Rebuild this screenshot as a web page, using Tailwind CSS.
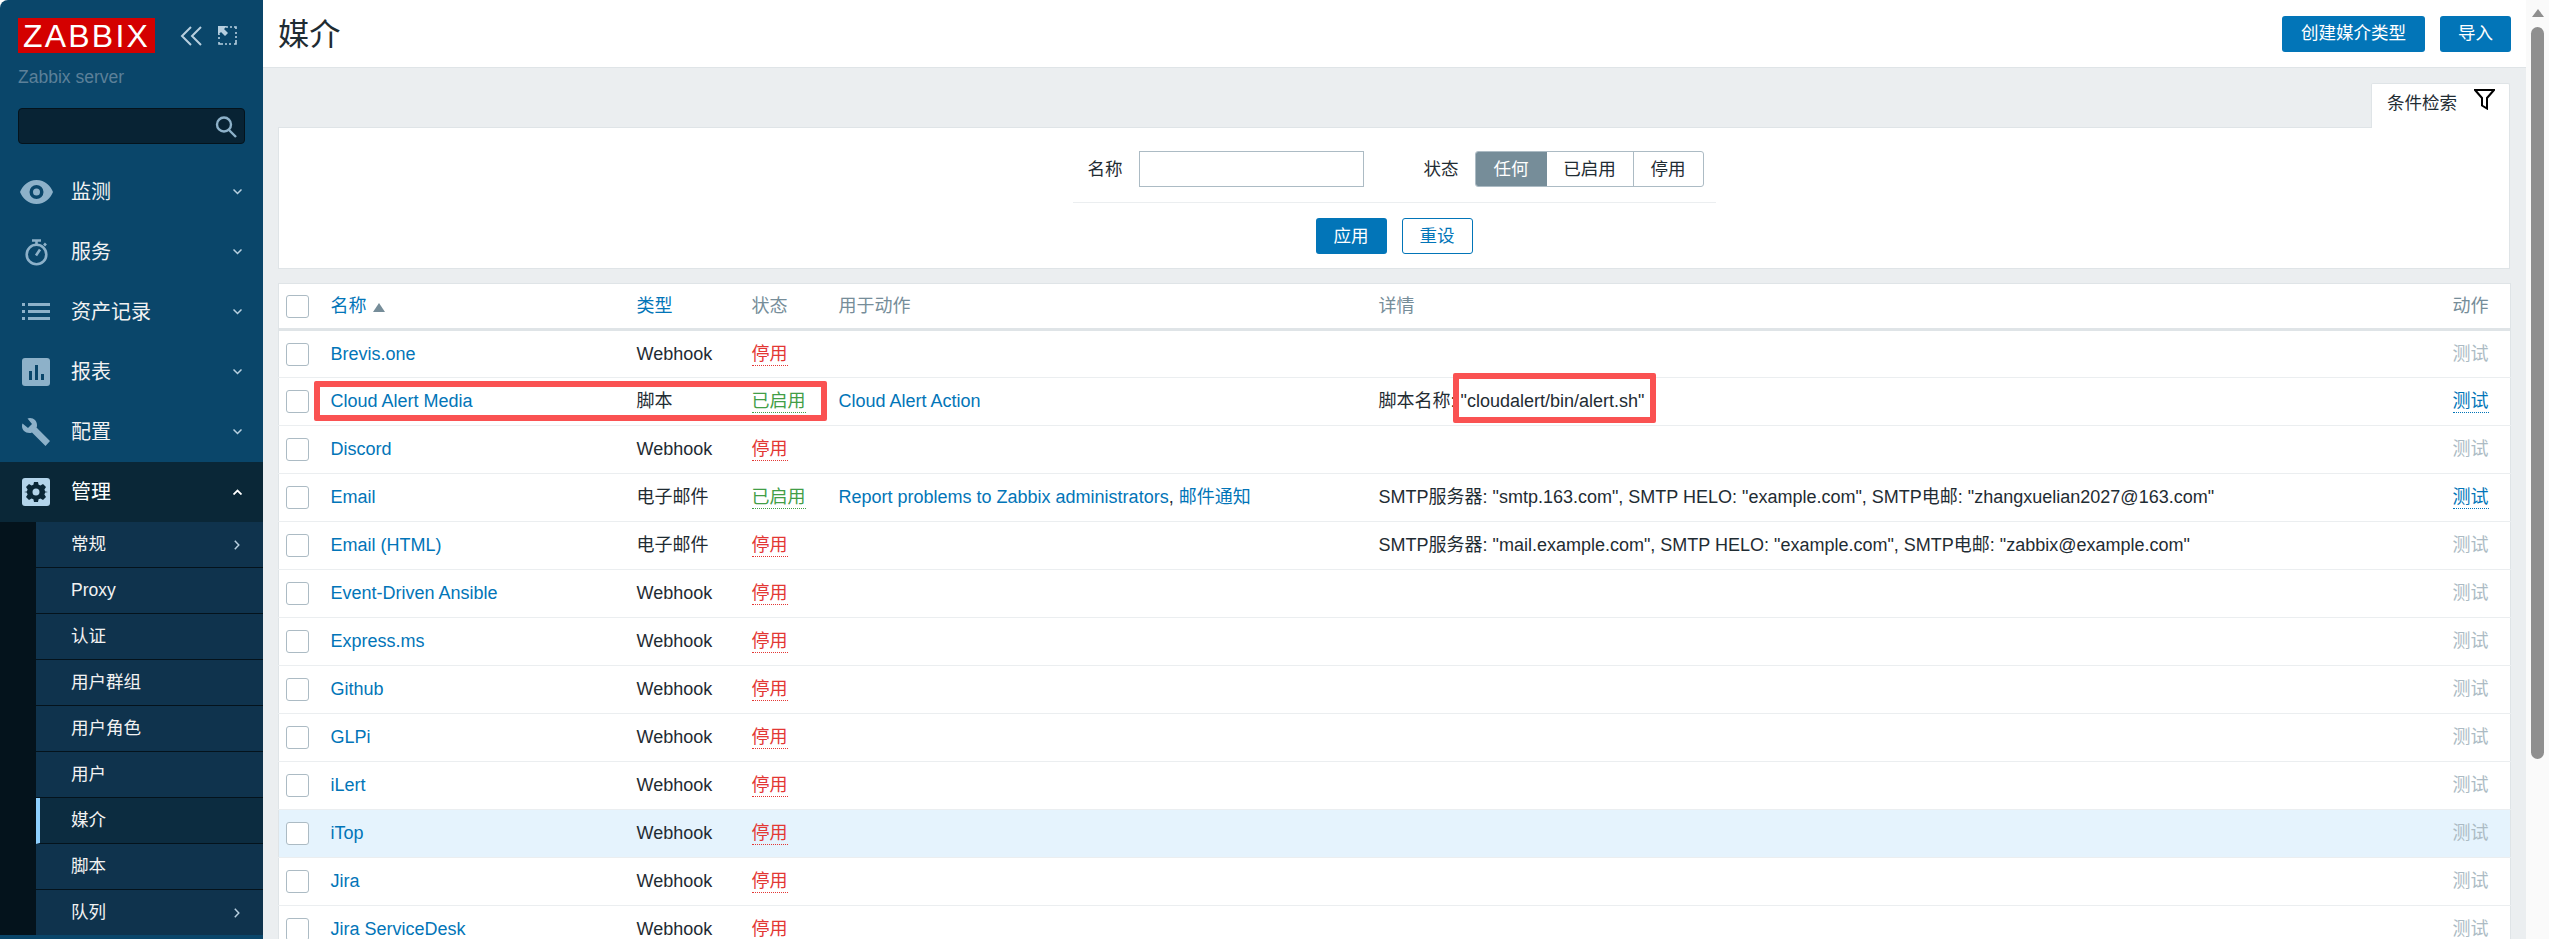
<!DOCTYPE html>
<html lang="zh">
<head>
    <meta charset="UTF-8">
    <title>媒介</title>
    <script src="https://cdn.jsdelivr.net/npm/@tailwindcss/browser@4"></script>
</head>
<body class="h-[939px] overflow-hidden bg-white text-[#1f2c33] text-[17.55px] font-['Liberation_Sans','Noto_Sans_CJK_SC',sans-serif]">
<div class="flex h-[939px]">

    <!-- sidebar -->
    <aside class="w-[263px] shrink-0 bg-[#0a466a] rounded-tl-lg text-[#f2f2f2]">
        <div class="flex items-center h-[35px] mt-[18px] ml-[18px]">
            <div class="w-[137px] h-[35px] bg-[#d40000] text-white text-[32px] leading-[36px] tracking-[2.2px] pl-[5px] overflow-hidden">ZABBIX</div>
            <svg class="ml-[25px]" width="22" height="20" viewBox="0 0 22 20" fill="none" stroke="#b7cfdf" stroke-width="2"><path d="M11 1 2 10l9 9M21 1l-9 9 9 9"/></svg>
            <svg class="ml-[16px]" width="19" height="19" viewBox="0 0 19 19" fill="none"><path d="M8 1h2M12 1h2M16 1h2v2M18 6v2M18 10v2M18 14v4h-2M13 18h-2M9 18H7M5 18H1v-2M1 13v-2M1 9V8" stroke="#b7cfdf" stroke-width="1.6"/><path d="M0 0h9L6 3l4 4-3 3-4-4-3 3z" fill="#b7cfdf"/></svg>
        </div>
        <div class="ml-[18px] mt-[15px] leading-[18px] text-[#5c8099]">Zabbix server</div>
        <div class="relative mx-[18px] mt-[22px] h-[36px] bg-[#082334] border border-[#04131c] rounded-[4px]">
            <svg class="absolute right-[6px] top-[6px]" width="24" height="24" viewBox="0 0 24 24" fill="none" stroke="#8db1c9" stroke-width="2.4"><circle cx="10" cy="9.5" r="7"/><path d="m15 15 7 7"/></svg>
        </div>

        <nav class="mt-[18px]">
            <a class="flex items-center h-[60px] pl-[20px] pr-[21px]">
                <span class="w-[51px]"><svg width="33" height="24" viewBox="0 0 33 24" fill="#8db1c9"><path fill-rule="evenodd" d="M16.5 0C25 0 30.500 6 33 12c-2.500 6-8 12-16.500 12S2.500 18 0 12C2.500 6 8 0 16.500 0zm0 5a7 7 0 1 0 0 14 7 7 0 0 0 0-14zm0 3.500a3.500 3.500 0 1 1 0 7 3.500 3.500 0 0 1 0-7z"/></svg></span>
                <span class="flex-1 text-[20px]">监测</span>
                <svg width="9" height="6" viewBox="0 0 9 6" fill="none" stroke="#b7cfdf" stroke-width="1.500"><path d="m.5.500 4 4 4-4"/></svg>
            </a>
            <a class="flex items-center h-[60px] pl-[20px] pr-[21px]">
                <span class="w-[51px] pl-[5px]"><svg width="23" height="27" viewBox="0 0 23 27" fill="none" stroke="#8db1c9" stroke-width="2.600"><circle cx="11.500" cy="15.500" r="9.800"/><path d="M7 1.500h9M11.500 2v3M19 4.500l2 2M11 16.500l4-6"/></svg></span>
                <span class="flex-1 text-[20px]">服务</span>
                <svg width="9" height="6" viewBox="0 0 9 6" fill="none" stroke="#b7cfdf" stroke-width="1.500"><path d="m.5.500 4 4 4-4"/></svg>
            </a>
            <a class="flex items-center h-[60px] pl-[20px] pr-[21px]">
                <span class="w-[51px] pl-[2px]"><svg width="28" height="20" viewBox="0 0 28 20" fill="#8db1c9"><path d="M0 1h3v3H0zM6 1h22v3H6zM0 8h3v3H0zM6 8h22v3H6zM0 15h3v3H0zM6 15h22v3H6z"/></svg></span>
                <span class="flex-1 text-[20px]">资产记录</span>
                <svg width="9" height="6" viewBox="0 0 9 6" fill="none" stroke="#b7cfdf" stroke-width="1.500"><path d="m.5.500 4 4 4-4"/></svg>
            </a>
            <a class="flex items-center h-[60px] pl-[20px] pr-[21px]">
                <span class="w-[51px] pl-[2px]"><svg width="28" height="28" viewBox="0 0 28 28"><rect width="28" height="28" rx="3" fill="#8db1c9"/><path d="M7 13h3v9H7zM13 7h3v15h-3zM19 16h3v6h-3z" fill="#0a466a"/></svg></span>
                <span class="flex-1 text-[20px]">报表</span>
                <svg width="9" height="6" viewBox="0 0 9 6" fill="none" stroke="#b7cfdf" stroke-width="1.500"><path d="m.5.500 4 4 4-4"/></svg>
            </a>
            <a class="flex items-center h-[60px] pl-[20px] pr-[21px]">
                <span class="w-[51px] pl-[2px]"><svg width="28" height="28" viewBox="0 0 28 28" fill="#8db1c9"><path d="M8 0c4 0 7 3 7 7 0 1 0 2-.5 2.500L28 23l-4.500 5L10 14.500c-.7.400-1.500.500-2.500.500C3 15 0 12 0 8c0-1 .2-2 .5-2.500L6 10l4-4L5.500.5C6 .2 7 0 8 0z"/></svg></span>
                <span class="flex-1 text-[20px]">配置</span>
                <svg width="9" height="6" viewBox="0 0 9 6" fill="none" stroke="#b7cfdf" stroke-width="1.500"><path d="m.5.500 4 4 4-4"/></svg>
            </a>
            <a class="flex items-center h-[60px] pl-[20px] pr-[21px] bg-[#0a2737] text-white">
                <span class="w-[51px] pl-[2px]"><svg width="28" height="28" viewBox="0 0 28 28"><rect width="28" height="28" rx="3" fill="#b3d4ea"/><path fill="#0a2737" fill-rule="evenodd" d="M12 4h4l.6 2.800 1.900.8L21 6l3 3-1.600 2.500.8 1.900L26 14v0l-2.800.6-.8 1.900L24 19l-3 3-2.500-1.600-1.900.8L16 24h-4l-.6-2.800-1.900-.8L7 22l-3-3 1.600-2.500-.8-1.900L2 14l2.800-.6.8-1.900L4 9l3-3 2.500 1.600 1.900-.8zm2 6.500a3.500 3.500 0 1 0 0 7 3.500 3.500 0 0 0 0-7z"/></svg></span>
                <span class="flex-1 text-[20px]">管理</span>
                <svg width="9" height="6" viewBox="0 0 9 6" fill="none" stroke="#fff" stroke-width="1.800"><path d="m.5 5.500 4-4 4 4"/></svg>
            </a>

            <div class="bg-[#04131c] pl-[36px]">
                <a class="flex items-center h-[46px] pl-[35px] pr-[23px] bg-[#0f334d] border-b border-[#04131c]"><span class="flex-1">常规</span><svg width="6" height="10" viewBox="0 0 6 10" fill="none" stroke="#b7cfdf" stroke-width="1.500"><path d="m.8.800 4 4.200-4 4.200"/></svg></a>
                <a class="flex items-center h-[46px] pl-[35px] bg-[#0f334d] border-b border-[#04131c]">Proxy</a>
                <a class="flex items-center h-[46px] pl-[35px] bg-[#0f334d] border-b border-[#04131c]">认证</a>
                <a class="flex items-center h-[46px] pl-[35px] bg-[#0f334d] border-b border-[#04131c]">用户群组</a>
                <a class="flex items-center h-[46px] pl-[35px] bg-[#0f334d] border-b border-[#04131c]">用户角色</a>
                <a class="flex items-center h-[46px] pl-[35px] bg-[#0f334d] border-b border-[#04131c]">用户</a>
                <a class="flex items-center h-[46px] pl-[31px] bg-[#0c2c40] border-b border-[#04131c] border-l-4 border-l-[#8ed0ff]">媒介</a>
                <a class="flex items-center h-[46px] pl-[35px] bg-[#0f334d] border-b border-[#04131c]">脚本</a>
                <a class="flex items-center h-[45px] pl-[35px] pr-[23px] bg-[#0f334d]"><span class="flex-1">队列</span><svg width="6" height="10" viewBox="0 0 6 10" fill="none" stroke="#b7cfdf" stroke-width="1.500"><path d="m.8.800 4 4.200-4 4.200"/></svg></a>
            </div>
        </nav>
    </aside>

    <!-- main -->
    <main class="w-[2263px] shrink-0 bg-[#ebeef0] overflow-hidden">
        <header class="flex items-center h-[68px] pl-[15px] pr-[15px] bg-white border-b border-[#dfe4e7]">
            <h1 class="flex-1 pt-[3px] text-[31.200px] leading-[40px]">媒介</h1>
            <button class="h-[36px] w-[143px] bg-[#0275b8] text-white rounded-[3px]">创建媒介类型</button>
            <button class="h-[36px] w-[71px] ml-[15px] bg-[#0275b8] text-white rounded-[3px]">导入</button>
        </header>

        <div class="ml-[15px] mr-[16px]">
            <!-- filter -->
            <div class="flex justify-end mt-[15px]">
                <div class="flex items-start w-[139px] h-[45px] -mb-px pt-[5px] pl-[15px] bg-white border border-b-0 border-[#dfe4e7] rounded-t-[2px] relative z-10">
                    <span class="leading-[28px]">条件检索</span>
                    <svg class="ml-[17px]" width="21" height="21" viewBox="0 0 21 21" fill="none" stroke="#000" stroke-width="2"><path d="M1 1h19l-7 8v10.500l-5-3V9z"/></svg>
                </div>
            </div>
            <div class="h-[142px] pt-[23px] bg-white border border-[#dfe4e7]">
                <div class="w-[643px] mx-auto">
                    <div class="flex items-center h-[36px] pl-[15px]">
                        <span class="w-[51px]">名称</span>
                        <div class="w-[225px] h-[36px] border border-[#acbbc4]"></div>
                        <span class="ml-[60px] w-[51px]">状态</span>
                        <div class="flex h-[36px] border border-[#acbbc4] rounded-[3px] overflow-hidden">
                            <span class="flex items-center justify-center w-[71px] bg-[#768d99] text-white">任何</span>
                            <span class="flex items-center justify-center w-[87px] border-r border-[#acbbc4]">已启用</span>
                            <span class="flex items-center justify-center w-[69px]">停用</span>
                        </div>
                    </div>
                    <div class="h-px mt-[15px] bg-[#ebeef0]"></div>
                    <div class="flex justify-center gap-[15px] mt-[15px]">
                        <button class="w-[71px] h-[36px] bg-[#0275b8] text-white rounded-[3px]">应用</button>
                        <button class="w-[71px] h-[36px] bg-white text-[#0275b8] border border-[#0275b8] rounded-[3px]">重设</button>
                    </div>
                </div>
            </div>

            <!-- media type table -->
            <table class="w-[2232px] mt-[14px] table-fixed bg-white text-[18px] border-x border-t border-[#dfe4e7]">
                <colgroup>
                    <col class="w-[52px]"><col class="w-[306px]"><col class="w-[115px]"><col class="w-[87px]"><col class="w-[540px]"><col class="w-[1074px]"><col class="w-[58px]">
                </colgroup>
                <thead class="text-left font-normal text-[#768d99]">
                    <tr class="h-[46px] border-b-[3px] border-[#dfe4e7]">
                        <th class="pl-[7px] font-normal"><span class="block w-[23px] h-[23px] bg-white border border-[#acbbc4] rounded-[3px]"></span></th>
                        <th class="font-normal text-[#0275b8]">名称<span class="inline-block ml-[6px] w-0 h-0 border-x-[6px] border-x-transparent border-b-[9px] border-b-[#768d99]"></span></th>
                        <th class="font-normal text-[#0275b8]">类型</th>
                        <th class="font-normal">状态</th>
                        <th class="font-normal">用于动作</th>
                        <th class="font-normal">详情</th>
                        <th class="font-normal">动作</th>
                    </tr>
                </thead>
                <tbody>
                    <tr class="h-[48px] border-b border-[#ebeef0]">
                        <td class="pl-[7px]"><span class="block w-[23px] h-[23px] bg-white border border-[#acbbc4] rounded-[3px]"></span></td>
                        <td class="text-[#0275b8]">Brevis.one</td><td>Webhook</td>
                        <td><span class="inline-block leading-[22px] text-[#e33734] border-b border-dotted border-[#e33734]">停用</span></td>
                        <td></td><td></td><td class="text-[#acbbc4]">测试</td>
                    </tr>
                    <tr class="h-[48px] border-b border-[#ebeef0]">
                        <td class="pl-[7px]"><span class="block w-[23px] h-[23px] bg-white border border-[#acbbc4] rounded-[3px]"></span></td>
                        <td class="text-[#0275b8]"><span class="relative">Cloud Alert Media<span class="absolute -left-[17px] -top-[10px] w-[513px] h-[40px] border-[6px] border-[#fa5252] rounded-[2px]"></span></span></td><td>脚本</td>
                        <td><span class="inline-block leading-[22px] text-[#429e47] border-b border-dotted border-[#429e47]">已启用</span></td>
                        <td class="text-[#0275b8]">Cloud Alert Action</td>
                        <td>脚本名称: <span class="relative">"cloudalert/bin/alert.sh"<span class="absolute -left-[8px] -top-[18px] w-[203px] h-[50px] border-[6px] border-[#fa5252] rounded-[2px]"></span></span></td>
                        <td><span class="inline-block leading-[22px] text-[#0275b8] border-b border-dotted border-[#0275b8]">测试</span></td>
                    </tr>
                    <tr class="h-[48px] border-b border-[#ebeef0]">
                        <td class="pl-[7px]"><span class="block w-[23px] h-[23px] bg-white border border-[#acbbc4] rounded-[3px]"></span></td>
                        <td class="text-[#0275b8]">Discord</td><td>Webhook</td>
                        <td><span class="inline-block leading-[22px] text-[#e33734] border-b border-dotted border-[#e33734]">停用</span></td>
                        <td></td><td></td><td class="text-[#acbbc4]">测试</td>
                    </tr>
                    <tr class="h-[48px] border-b border-[#ebeef0]">
                        <td class="pl-[7px]"><span class="block w-[23px] h-[23px] bg-white border border-[#acbbc4] rounded-[3px]"></span></td>
                        <td class="text-[#0275b8]">Email</td><td>电子邮件</td>
                        <td><span class="inline-block leading-[22px] text-[#429e47] border-b border-dotted border-[#429e47]">已启用</span></td>
                        <td><span class="text-[#0275b8]">Report problems to Zabbix administrators</span>, <span class="text-[#0275b8]">邮件通知</span></td>
                        <td>SMTP服务器: "smtp.163.com", SMTP HELO: "example.com", SMTP电邮: "zhangxuelian2027@163.com"</td>
                        <td><span class="inline-block leading-[22px] text-[#0275b8] border-b border-dotted border-[#0275b8]">测试</span></td>
                    </tr>
                    <tr class="h-[48px] border-b border-[#ebeef0]">
                        <td class="pl-[7px]"><span class="block w-[23px] h-[23px] bg-white border border-[#acbbc4] rounded-[3px]"></span></td>
                        <td class="text-[#0275b8]">Email (HTML)</td><td>电子邮件</td>
                        <td><span class="inline-block leading-[22px] text-[#e33734] border-b border-dotted border-[#e33734]">停用</span></td>
                        <td></td>
                        <td>SMTP服务器: "mail.example.com", SMTP HELO: "example.com", SMTP电邮: "zabbix@example.com"</td>
                        <td class="text-[#acbbc4]">测试</td>
                    </tr>
                    <tr class="h-[48px] border-b border-[#ebeef0]">
                        <td class="pl-[7px]"><span class="block w-[23px] h-[23px] bg-white border border-[#acbbc4] rounded-[3px]"></span></td>
                        <td class="text-[#0275b8]">Event-Driven Ansible</td><td>Webhook</td>
                        <td><span class="inline-block leading-[22px] text-[#e33734] border-b border-dotted border-[#e33734]">停用</span></td>
                        <td></td><td></td><td class="text-[#acbbc4]">测试</td>
                    </tr>
                    <tr class="h-[48px] border-b border-[#ebeef0]">
                        <td class="pl-[7px]"><span class="block w-[23px] h-[23px] bg-white border border-[#acbbc4] rounded-[3px]"></span></td>
                        <td class="text-[#0275b8]">Express.ms</td><td>Webhook</td>
                        <td><span class="inline-block leading-[22px] text-[#e33734] border-b border-dotted border-[#e33734]">停用</span></td>
                        <td></td><td></td><td class="text-[#acbbc4]">测试</td>
                    </tr>
                    <tr class="h-[48px] border-b border-[#ebeef0]">
                        <td class="pl-[7px]"><span class="block w-[23px] h-[23px] bg-white border border-[#acbbc4] rounded-[3px]"></span></td>
                        <td class="text-[#0275b8]">Github</td><td>Webhook</td>
                        <td><span class="inline-block leading-[22px] text-[#e33734] border-b border-dotted border-[#e33734]">停用</span></td>
                        <td></td><td></td><td class="text-[#acbbc4]">测试</td>
                    </tr>
                    <tr class="h-[48px] border-b border-[#ebeef0]">
                        <td class="pl-[7px]"><span class="block w-[23px] h-[23px] bg-white border border-[#acbbc4] rounded-[3px]"></span></td>
                        <td class="text-[#0275b8]">GLPi</td><td>Webhook</td>
                        <td><span class="inline-block leading-[22px] text-[#e33734] border-b border-dotted border-[#e33734]">停用</span></td>
                        <td></td><td></td><td class="text-[#acbbc4]">测试</td>
                    </tr>
                    <tr class="h-[48px] border-b border-[#ebeef0]">
                        <td class="pl-[7px]"><span class="block w-[23px] h-[23px] bg-white border border-[#acbbc4] rounded-[3px]"></span></td>
                        <td class="text-[#0275b8]">iLert</td><td>Webhook</td>
                        <td><span class="inline-block leading-[22px] text-[#e33734] border-b border-dotted border-[#e33734]">停用</span></td>
                        <td></td><td></td><td class="text-[#acbbc4]">测试</td>
                    </tr>
                    <tr class="h-[48px] border-b border-[#ebeef0] bg-[#e5f3fd]">
                        <td class="pl-[7px]"><span class="block w-[23px] h-[23px] bg-white border border-[#acbbc4] rounded-[3px]"></span></td>
                        <td class="text-[#0275b8]">iTop</td><td>Webhook</td>
                        <td><span class="inline-block leading-[22px] text-[#e33734] border-b border-dotted border-[#e33734]">停用</span></td>
                        <td></td><td></td><td class="text-[#acbbc4]">测试</td>
                    </tr>
                    <tr class="h-[48px] border-b border-[#ebeef0]">
                        <td class="pl-[7px]"><span class="block w-[23px] h-[23px] bg-white border border-[#acbbc4] rounded-[3px]"></span></td>
                        <td class="text-[#0275b8]">Jira</td><td>Webhook</td>
                        <td><span class="inline-block leading-[22px] text-[#e33734] border-b border-dotted border-[#e33734]">停用</span></td>
                        <td></td><td></td><td class="text-[#acbbc4]">测试</td>
                    </tr>
                    <tr class="h-[48px] border-b border-[#ebeef0]">
                        <td class="pl-[7px]"><span class="block w-[23px] h-[23px] bg-white border border-[#acbbc4] rounded-[3px]"></span></td>
                        <td class="text-[#0275b8]">Jira ServiceDesk</td><td>Webhook</td>
                        <td><span class="inline-block leading-[22px] text-[#e33734] border-b border-dotted border-[#e33734]">停用</span></td>
                        <td></td><td></td><td class="text-[#acbbc4]">测试</td>
                    </tr>
                </tbody>
            </table>
        </div>
    </main>

    <!-- page scrollbar -->
    <div class="flex-1 flex flex-col items-center bg-[#fafafa]">
        <span class="mt-[9px] w-0 h-0 border-x-[6px] border-x-transparent border-b-[8px] border-b-[#8f8f8f]"></span>
        <span class="mt-[10px] w-[13px] h-[732px] bg-[#8f8f8f] rounded-full"></span>
    </div>
</div>
</body>
</html>
